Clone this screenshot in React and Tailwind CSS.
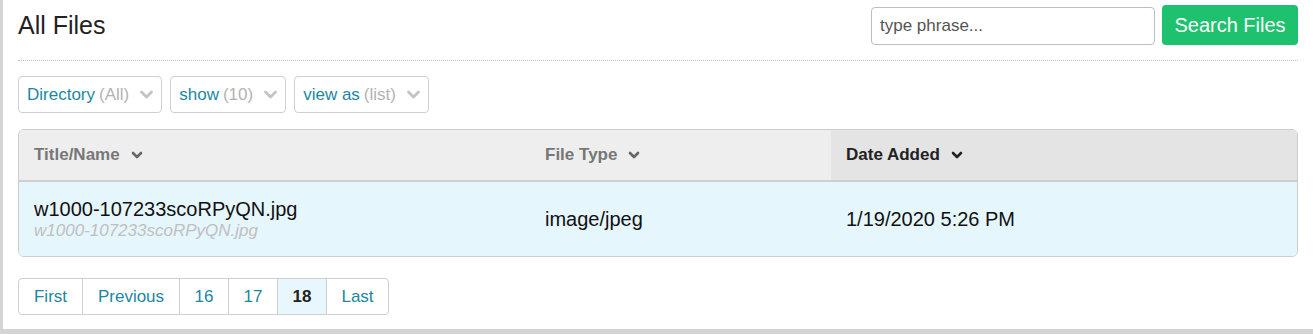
const FONT = { fontFamily: '"Liberation Sans", Arial, Helvetica, sans-serif' }

const PAGES = [
  { label: 'First', w: 'w-[63px]' },
  { label: 'Previous', w: 'w-[97px]' },
  { label: '16', w: 'w-[49px]' },
  { label: '17', w: 'w-[49px]' },
  { label: '18', w: 'w-[49px]', active: true },
  { label: 'Last', w: 'w-[62px]' }
]

const FILTERS = [
  { label: 'Directory', value: '(All)' },
  { label: 'show', value: '(10)' },
  { label: 'view as', value: '(list)' }
]

function Chevron({ className = '', size = 12, stroke = 2.6 }) {
  return (
    <svg width={size} height={size} viewBox="0 0 12 12" className={className} fill="none">
      <polyline points="2,4 6,8 10,4" stroke="currentColor" strokeWidth={stroke} strokeLinecap="round" strokeLinejoin="round" />
    </svg>
  )
}

export default function App() {
  return (
    <div className="w-full h-[334px] bg-[#d4d4d4] pl-[3px] pb-[5px]" style={FONT}>
      <div className="h-full bg-white px-[15px]">
        <div className="h-[50px] flex items-center justify-between">
          <h1 className="text-[25px] text-[#222] leading-none mt-[1px]">All Files</h1>
          <div className="flex items-center gap-[7px]">
            <input
              type="text"
              placeholder="type phrase..."
              className="w-[284px] h-[38px] rounded-[4px] border border-[#bdbdbd] px-[8px] text-[17px] text-[#333] placeholder:text-[#555] outline-none mt-[1px]"
            />
            <button className="h-[40px] w-[136px] rounded-[4px] bg-[#1ec26e] text-white text-[20px] leading-none">
              Search Files
            </button>
          </div>
        </div>

        <div className="mt-[10px] border-t border-dotted border-[#bbb]" />

        <div className="mt-[15px] flex gap-[8px]">
          {FILTERS.map((f) => (
            <div
              key={f.label}
              className="h-[37px] flex items-center rounded-[4px] border border-[#cfcfcf] pl-[8px] pr-[7px] text-[17px]"
            >
              <span className="text-[#1b87a3]">{f.label}</span>
              <span className="ml-[4px] text-[#b3b3b3]">{f.value}</span>
              <Chevron className="ml-[10px] text-[#c4c4c4]" size={15} stroke={2.3} />
            </div>
          ))}
        </div>

        <div className="mt-[16px] rounded-[6px] border border-[#cdcdcd] overflow-hidden">
          <div className="flex h-[52px] bg-[#eeeeee] border-b-2 border-[#cfcfcf] text-[17px] font-bold">
            <div className="w-[511px] flex items-center px-[15px] text-[#777]">
              Title/Name
              <Chevron className="ml-[11px] text-[#666]" size={12} stroke={2.6} />
            </div>
            <div className="w-[301px] flex items-center px-[15px] text-[#777]">
              File Type
              <Chevron className="ml-[11px] text-[#666]" size={12} stroke={2.6} />
            </div>
            <div className="flex-1 flex items-center px-[15px] bg-[#e4e4e4] text-[#222]">
              Date Added
              <Chevron className="ml-[11px] text-[#222]" size={12} stroke={2.6} />
            </div>
          </div>
          <div className="flex h-[74px] bg-[#e6f6fd] text-[#111]">
            <div className="w-[511px] flex flex-col justify-center px-[15px]">
              <div className="text-[20px] leading-[24px]">w1000-107233scoRPyQN.jpg</div>
              <div className="text-[17px] leading-[20px] italic text-[#c0c0c0]">w1000-107233scoRPyQN.jpg</div>
            </div>
            <div className="w-[301px] flex items-center px-[15px] text-[20px]">image/jpeg</div>
            <div className="flex-1 flex items-center px-[15px] text-[20px]">1/19/2020 5:26 PM</div>
          </div>
        </div>

        <div className="mt-[21px] inline-flex h-[37px] rounded-[4px] border border-[#cfcfcf] overflow-hidden text-[17px]">
          {PAGES.map((p, i) => (
            <div
              key={p.label}
              className={[
                'flex items-center justify-center',
                p.w,
                i > 0 ? 'border-l border-[#cfcfcf]' : '',
                p.active ? 'bg-[#e8f6fd] text-[#222] font-bold' : 'text-[#1b87a3]'
              ].join(' ')}
            >
              {p.label}
            </div>
          ))}
        </div>
      </div>
    </div>
  )
}
